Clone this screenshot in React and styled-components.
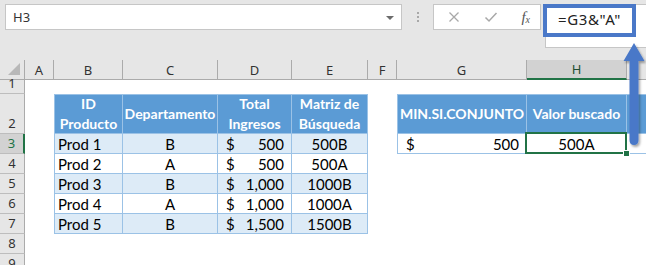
import React from "react";
import styled, { createGlobalStyle } from "styled-components";

const GlobalStyle = createGlobalStyle`
  html, body {
    margin: 0;
    padding: 0;
    background: #ffffff;
    overflow: hidden;
  }
  body {
    font-family: Lato, "Liberation Sans", sans-serif;
  }
`;

const COLUMNS = [
  { key: "A", width: 29 },
  { key: "B", width: 69 },
  { key: "C", width: 95 },
  { key: "D", width: 74 },
  { key: "E", width: 76 },
  { key: "F", width: 29 },
  { key: "G", width: 130 },
  { key: "H", width: 100 },
  { key: "I", width: 100 },
];

const ROWS = [
  { n: 1, h: 14 },
  { n: 2, h: 40 },
  { n: 3, h: 20 },
  { n: 4, h: 20 },
  { n: 5, h: 20 },
  { n: 6, h: 20 },
  { n: 7, h: 20 },
  { n: 8, h: 20 },
  { n: 9, h: 20 },
];

const products = [
  { id: "Prod 1", dept: "B", total: "500", key: "500B" },
  { id: "Prod 2", dept: "A", total: "500", key: "500A" },
  { id: "Prod 3", dept: "B", total: "1,000", key: "1000B" },
  { id: "Prod 4", dept: "A", total: "1,000", key: "1000A" },
  { id: "Prod 5", dept: "B", total: "1,500", key: "1500B" },
];

const App = () => {
  return (
    <>
      <GlobalStyle />
      <Window>
        <TopBar>
          <NameBox>
            <span>H3</span>
            <Caret />
          </NameBox>
          <Grip>
            <i />
            <i />
            <i />
          </Grip>
          <ButtonBox>
            <svg width="12" height="12" viewBox="0 0 12 12">
              <path d="M1.5 1.5 L10.5 10.5 M10.5 1.5 L1.5 10.5" stroke="#a8a8a8" strokeWidth="1.3" fill="none" />
            </svg>
            <svg width="14" height="12" viewBox="0 0 14 12">
              <path d="M1.5 6.5 L5 10 L12.5 2" stroke="#a8a8a8" strokeWidth="1.5" fill="none" />
            </svg>
            <Fx>
              f<sub>x</sub>
            </Fx>
          </ButtonBox>
          <FormulaBar>=G3&amp;"A"</FormulaBar>
        </TopBar>

        <Sheet>
          <Corner>
            <svg width="14" height="14" viewBox="0 0 14 14">
              <path d="M13 1 L13 13 L1 13 Z" fill="#b8b8b8" />
            </svg>
          </Corner>
          {COLUMNS.map((c) => (
            <ColHead key={c.key} active={c.key === "H"}>
              {c.key}
            </ColHead>
          ))}
          {ROWS.map((r) => (
            <RowHead key={r.n} active={r.n === 3} style={{ gridRow: r.n + 1 }}>
              {r.n}
            </RowHead>
          ))}

          <LookupTable>
            <Head>
              ID
              <br />
              Producto
            </Head>
            <Head>Departamento</Head>
            <Head>
              Total
              <br />
              Ingresos
            </Head>
            <Head>
              Matriz de
              <br />
              Búsqueda
            </Head>
            {products.map((p, i) => (
              <React.Fragment key={p.id}>
                <Cell striped={i % 2 === 0}>{p.id}</Cell>
                <Cell striped={i % 2 === 0} align="center">
                  {p.dept}
                </Cell>
                <Cell striped={i % 2 === 0}>
                  <Money>
                    <span>$</span>
                    <span>{p.total}</span>
                  </Money>
                </Cell>
                <Cell striped={i % 2 === 0} align="center">
                  {p.key}
                </Cell>
              </React.Fragment>
            ))}
          </LookupTable>

          <ResultTable>
            <Head>MIN.SI.CONJUNTO</Head>
            <Head>Valor buscado</Head>
            <Head />
            <Cell>
              <Money>
                <span>$</span>
                <span>500</span>
              </Money>
            </Cell>
            <Cell align="center" selected>
              500A
              <Handle />
            </Cell>
            <Cell />
          </ResultTable>
        </Sheet>

        <Highlight />
        <Arrow width="26" height="112" viewBox="0 0 26 112">
          <defs>
            <filter id="shadow" x="-50%" y="-20%" width="200%" height="140%">
              <feDropShadow dx="1.5" dy="2" stdDeviation="1.2" floodColor="#000" floodOpacity="0.35" />
            </filter>
          </defs>
          <path
            d="M12 1 L22.5 19 L16.5 19 L16.5 98 Q16.5 103 12 103 Q7.5 103 7.5 98 L7.5 19 L1.5 19 Z"
            fill="#4a78c8"
            filter="url(#shadow)"
          />
        </Arrow>
      </Window>
    </>
  );
};

const Window = styled.div`
  position: relative;
  width: 646px;
  height: 265px;
  overflow: hidden;
  background: #ffffff;
`;

const TopBar = styled.div`
  display: flex;
  align-items: flex-start;
  height: 60px;
  box-sizing: border-box;
  padding: 4px 0 0 5px;
  background: #e6e6e6;
  font-family: "Noto Sans", "Open Sans", sans-serif;
`;

const NameBox = styled.div`
  display: flex;
  align-items: center;
  justify-content: space-between;
  box-sizing: border-box;
  width: 397px;
  height: 26px;
  padding: 0 7px 0 7px;
  background: #ffffff;
  border: 1px solid #c6c6c6;
  font-size: 13px;
  color: #333333;
`;

const Caret = styled.span`
  width: 0;
  height: 0;
  margin-top: 1px;
  border-left: 4px solid transparent;
  border-right: 4px solid transparent;
  border-top: 4px solid #6b6b6b;
`;

const Grip = styled.div`
  display: flex;
  flex-direction: column;
  align-items: center;
  gap: 2px;
  width: 31px;
  padding-top: 8px;

  i {
    display: block;
    width: 2px;
    height: 2px;
    background: #a8a8a8;
  }
`;

const ButtonBox = styled.div`
  display: flex;
  align-items: center;
  justify-content: space-between;
  box-sizing: border-box;
  width: 108px;
  height: 26px;
  padding: 0 10px 0 14px;
  background: #ffffff;
  border: 1px solid #c6c6c6;
`;

const Fx = styled.span`
  font-family: "Liberation Serif", serif;
  font-style: italic;
  font-size: 15px;
  color: #555555;
  line-height: 1;

  sub {
    font-size: 10px;
    vertical-align: -1px;
  }
`;

const FormulaBar = styled.div`
  flex: 1;
  box-sizing: border-box;
  height: 44px;
  margin-left: 4px;
  padding: 4px 0 0 12px;
  background: #ffffff;
  border: 1px solid #c6c6c6;
  border-right: none;
  font-size: 15px;
  letter-spacing: 0.6px;
  color: #222222;
`;

const Highlight = styled.div`
  position: absolute;
  left: 543px;
  top: 4px;
  width: 93px;
  height: 33px;
  box-sizing: border-box;
  border: 4px solid #4a78c8;
`;

const Arrow = styled.svg`
  position: absolute;
  left: 622px;
  top: 42px;
  overflow: visible;
`;

const Sheet = styled.div`
  display: grid;
  grid-template-columns: 25px ${COLUMNS.map((c) => `${c.width}px`).join(" ")};
  grid-template-rows: 20px ${ROWS.map((r) => `${r.h}px`).join(" ")};
  font-family: Lato, "Liberation Sans", sans-serif;
`;

const Corner = styled.div`
  display: flex;
  align-items: flex-end;
  justify-content: flex-end;
  padding: 0 3px 3px 0;
  background: #e6e6e6;
  border-bottom: 1px solid #ababab;
  border-right: 1px solid #ababab;
`;

const ColHead = styled.div`
  display: flex;
  align-items: center;
  justify-content: center;
  box-sizing: border-box;
  background: ${(p) => (p.active ? "#d2d2d2" : "#e6e6e6")};
  border-right: 1px solid #ababab;
  border-bottom: ${(p) => (p.active ? "2px solid #217346" : "1px solid #ababab")};
  font-family: "Noto Sans", "Open Sans", sans-serif;
  font-size: 13px;
  color: ${(p) => (p.active ? "#1f4e33" : "#333333")};
`;

const RowHead = styled.div`
  grid-column: 1;
  display: flex;
  align-items: flex-end;
  justify-content: center;
  box-sizing: border-box;
  padding-bottom: 1px;
  background: ${(p) => (p.active ? "#d2d2d2" : "#e6e6e6")};
  border-bottom: 1px solid #bdbdbd;
  border-right: ${(p) => (p.active ? "2px solid #217346" : "1px solid #ababab")};
  font-family: "Noto Sans", "Open Sans", sans-serif;
  font-size: 13px;
  line-height: 18px;
  color: ${(p) => (p.active ? "#217346" : "#333333")};
`;

const Table = styled.div`
  display: grid;
  grid-template-rows: 40px;
  grid-auto-rows: 20px;
  & > *:first-child,
  & > *:nth-child(${(p) => p.cols}n + 1) {
    border-left: 1px solid #9bc2e6;
  }
  & > *:nth-child(-n + ${(p) => p.cols}) {
    border-top: 1px solid #9bc2e6;
  }
`;

const LookupTable = styled(Table).attrs({ cols: 4 })`
  grid-column: 3 / 7;
  grid-row: 3 / 9;
  grid-template-columns: 69px 95px 74px 76px;
`;

const ResultTable = styled(Table).attrs({ cols: 3 })`
  grid-column: 8 / 11;
  grid-row: 3 / 5;
  grid-template-columns: 130px 100px 100px;
`;

const Head = styled.div`
  display: flex;
  align-items: center;
  justify-content: center;
  box-sizing: border-box;
  background: #5b9bd5;
  border-right: 1px solid #9bc2e6;
  border-bottom: 1px solid #9bc2e6;
  color: #ffffff;
  font-weight: 700;
  font-size: 14px;
  line-height: 20px;
  text-align: center;
  white-space: nowrap;
`;

const Cell = styled.div`
  position: relative;
  display: flex;
  align-items: center;
  justify-content: ${(p) => (p.align === "center" ? "center" : "flex-start")};
  box-sizing: border-box;
  padding: 0 3px;
  background: ${(p) => (p.striped ? "#ddebf7" : "#ffffff")};
  border-right: 1px solid #9bc2e6;
  border-bottom: 1px solid #9bc2e6;
  font-size: 15px;
  color: #000000;
  white-space: nowrap;

  ${(p) =>
    p.selected &&
    `
    &::after {
      content: "";
      position: absolute;
      left: -2px;
      top: -2px;
      right: -1px;
      bottom: -1px;
      border: 2px solid #217346;
    }
  `}
`;

const Money = styled.div`
  display: flex;
  justify-content: space-between;
  width: 100%;
  padding: 0 4px 0 5px;
  box-sizing: border-box;
`;

const Handle = styled.span`
  position: absolute;
  right: -4px;
  bottom: -4px;
  width: 5px;
  height: 5px;
  background: #217346;
  border: 1px solid #ffffff;
  z-index: 2;
`;

export default App;
